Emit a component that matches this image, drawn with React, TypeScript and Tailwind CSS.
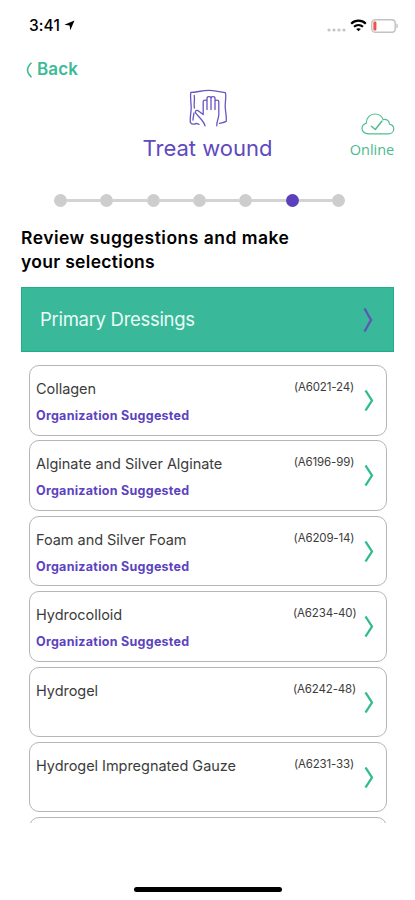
import clsx from 'clsx';

interface Dressing {
  name: string;
  code: string;
  suggested: boolean;
}

const DRESSINGS: Dressing[] = [
  { name: 'Collagen', code: '(A6021-24)', suggested: true },
  { name: 'Alginate and Silver Alginate', code: '(A6196-99)', suggested: true },
  { name: 'Foam and Silver Foam', code: '(A6209-14)', suggested: true },
  { name: 'Hydrocolloid', code: '(A6234-40)', suggested: true },
  { name: 'Hydrogel', code: '(A6242-48)', suggested: false },
  { name: 'Hydrogel Impregnated Gauze', code: '(A6231-33)', suggested: false },
];

const STEPS = 7;
const CURRENT_STEP = 5;

function StatusBar() {
  return (
    <div className="flex h-[51px] shrink-0 items-center pl-[29px] pr-[16px]">
      <span className="text-[15.5px] font-medium tracking-[0.1px] text-black">3:41</span>
      <svg className="ml-[4px]" width="11" height="11" viewBox="0 0 11 11">
        <path d="M10.5 0.5 6.3 10.3 5.6 5.6 0.4 4.8Z" fill="#000" />
      </svg>
      <div className="ml-auto flex items-center">
        <svg className="mt-[8px]" width="19" height="4" viewBox="0 0 19 4" fill="#c4c4c4">
          <circle cx="2" cy="2" r="1.6" />
          <circle cx="7" cy="2" r="1.6" />
          <circle cx="12" cy="2" r="1.6" />
          <circle cx="17" cy="2" r="1.6" />
        </svg>
        <svg className="ml-[4px]" width="17" height="13" viewBox="0 0 17 13" fill="none" stroke="#000" strokeWidth="2.2">
          <path d="M1.2 4.7C5.3 0.7 11.7 0.7 15.8 4.7" />
          <path d="M4 7.8C6.6 5.4 10.4 5.4 13 7.8" />
          <path d="M8.5 12.3 6.2 10.1C7.5 8.9 9.5 8.9 10.8 10.1Z" fill="#000" stroke="none" />
        </svg>
        <svg className="ml-[4px]" width="28" height="14" viewBox="0 0 28 14">
          <rect x="0.8" y="0.8" width="23.4" height="12.4" rx="3.2" fill="none" stroke="#c2c2c2" strokeWidth="1.4" />
          <rect x="2.4" y="2.6" width="3" height="8.8" rx="1" fill="#f0504c" />
          <path d="M25.4 4.6c2 .5 2 4.3 0 4.8Z" fill="#bdbdbd" />
        </svg>
      </div>
    </div>
  );
}

function HandIcon() {
  return (
    <svg
      width="40"
      height="38"
      viewBox="0 0 40 38"
      fill="none"
      stroke="#6a55c2"
      strokeWidth="1.3"
      strokeLinecap="round"
      strokeLinejoin="round"
    >
      <path d="M11 35.4 8.5 34.4C6 35.6 4 35.6 2.4 33.6 1.6 29 3.4 23 3.2 18 3 12 2 8 2.8 3.4 9 3.4 13 1.4 21 1.4 27 1.4 31 3.2 37.4 3.6 38.6 8 37 12.5 37.2 17.5 37.4 23 38.8 28 38.2 32.4 35 34 33.600 33.600 31.500 34.400" />
      <path d="M6.2 6.500C7.200 10.500 5.400 14.500 6.400 19" />
      <path d="M5 31C5.200 27.500 5.800 26 6 24" />
      <path d="M17 36.800C15.600 31.500 11.300 28.800 7.800 24.200 6.600 22.100 8.200 20.700 10.200 21.700L15.200 25.600V12.600C15.200 10.500 19 10.500 19 12.600V20.500M19 20.500V9.400C19 7.100 23 7.100 23 9.400V20.500M23 9.400C23 7.100 27 7.100 27 9.400V20.500M27 12.600C27 10.500 30.800 10.500 30.800 12.600V25.500C30.800 29.500 28.600 31.500 28.800 36.800" />
    </svg>
  );
}

function CloudIcon() {
  return (
    <svg
      width="34"
      height="22"
      viewBox="0 0 34 22"
      fill="none"
      stroke="#53bd92"
      strokeWidth="1.2"
      strokeLinecap="round"
      strokeLinejoin="round"
    >
      <path d="M7.5 20.8C3.5 20.8 1 18.5 1 15.6 1 12.6 3 10.8 5.2 10.3 5.2 5 9 1 14 1 18.2 1 21 3.2 22.2 6.6 25.5 5.9 28.3 7.8 28.5 11.2 31.3 11.8 32.7 13.6 32.7 15.9 32.7 18.7 30.5 20.8 27.5 20.8Z" />
      <path d="M10.5 13.2 14.3 16.5 21 8" strokeWidth="1.5" />
    </svg>
  );
}

function Chevron({ className, height }: { className: string; height: number }) {
  return (
    <svg className={className} width="10" height={height} viewBox="0 0 10 24" preserveAspectRatio="none" fill="none" stroke="currentColor" strokeWidth="2.3">
      <path d="M1.5 0.5 8 12 1.5 23.5" />
    </svg>
  );
}

function Stepper() {
  return (
    <div className="ml-[54px] mr-[70px] mt-[31px] flex h-[14px] items-center">
      {Array.from({ length: STEPS }, (_, i) => (
        <div key={i} className={clsx('flex items-center', i > 0 && 'flex-1')}>
          {i > 0 && <div className="h-[3px] flex-1 bg-[#d3d3d3]" />}
          <div className={clsx('size-[13px] rounded-full', i === CURRENT_STEP ? 'bg-[#5b3fbd]' : 'bg-[#cdcdcd]')} />
        </div>
      ))}
    </div>
  );
}

function DressingCard({ dressing }: { dressing: Dressing }) {
  return (
    <li className="flex h-[70.5px] shrink-0 rounded-[10px] border-[1.5px] border-[#b5b5b5] pl-[6.5px] pr-[12px]">
      <div className="flex-1 whitespace-nowrap pt-[13px]">
        <p className="text-[14.5px] leading-5 tracking-[-0.04px] text-[#3c3c3c]">{dressing.name}</p>
        {dressing.suggested && (
          <p className="mt-[8px] text-[12.5px] font-bold leading-[18px] tracking-[0.27px] text-[#5b43c0]">
            Organization Suggested
          </p>
        )}
      </div>
      <span className="w-[62px] whitespace-nowrap pt-[12px] text-center text-[11.5px] leading-[18px] tracking-[-0.15px] text-[#3c3c3c]">
        {dressing.code}
      </span>
      <Chevron className="ml-[9px] mt-[24px] text-[#2fba8f]" height={21} />
    </li>
  );
}

export default function App() {
  return (
    <div className="flex h-[900px] w-[415px] flex-col overflow-hidden bg-white font-['Inter','Liberation_Sans',sans-serif]">
      <StatusBar />

      <button type="button" className="ml-[25px] mt-[8px] flex h-[22px] items-center self-start text-[#3dba96]">
        <svg width="8" height="16" viewBox="0 0 8 16" fill="none" stroke="currentColor" strokeWidth="1.6">
          <path d="M6.5 0.8C1.2 6 1.2 10 6.5 15.2" />
        </svg>
        <span className="ml-[4px] text-[17px] font-semibold tracking-[0.1px]">Back</span>
      </button>

      <header className="mt-[8px] grid h-[73px] grid-cols-[1fr_auto_1fr]">
        <div />
        <div className="flex flex-col items-center">
          <HandIcon />
          <h1 className="mt-[7px] whitespace-nowrap text-[22px] leading-7 text-[#5f4ac0]">Treat wound</h1>
        </div>
        <div className="flex flex-col items-center justify-self-end pr-[20px] pt-[24px] text-[#4cba8c]">
          <div className="pl-[12px]">
            <CloudIcon />
          </div>
          <span className="mt-[5px] font-['Open_Sans','Noto_Sans',sans-serif] text-[14.5px] leading-5">Online</span>
        </div>
      </header>

      <Stepper />

      <h2 className="mt-[19px] pl-[21px] text-[17.5px] font-semibold leading-[23.5px] tracking-[0.48px] text-black">
        Review suggestions and make
        <br />
        <span className="tracking-[0.3px]">your selections</span>
      </h2>

      <div className="mx-[21px] mt-[14px] flex h-[65px] shrink-0 items-center justify-between border border-[#1fae87] bg-[#39b89a] pl-[18px] pr-[20px]">
        <span className="text-[18.5px] tracking-[-0.3px] text-[#e9fbf5]">Primary Dressings</span>
        <Chevron className="text-[#5f55b8]" height={24} />
      </div>

      <ul className="ml-[28.5px] mr-[28px] mt-[13px] flex h-[458px] shrink-0 flex-col gap-[4.9px] overflow-hidden">
        {DRESSINGS.map((dressing) => (
          <DressingCard key={dressing.name} dressing={dressing} />
        ))}
        <li className="h-[70px] shrink-0 rounded-[10px] border-[1.5px] border-[#b5b5b5]" />
      </ul>

      <div className="mx-auto mt-[64px] h-[5px] w-[148px] rounded-full bg-black" />
    </div>
  );
}
